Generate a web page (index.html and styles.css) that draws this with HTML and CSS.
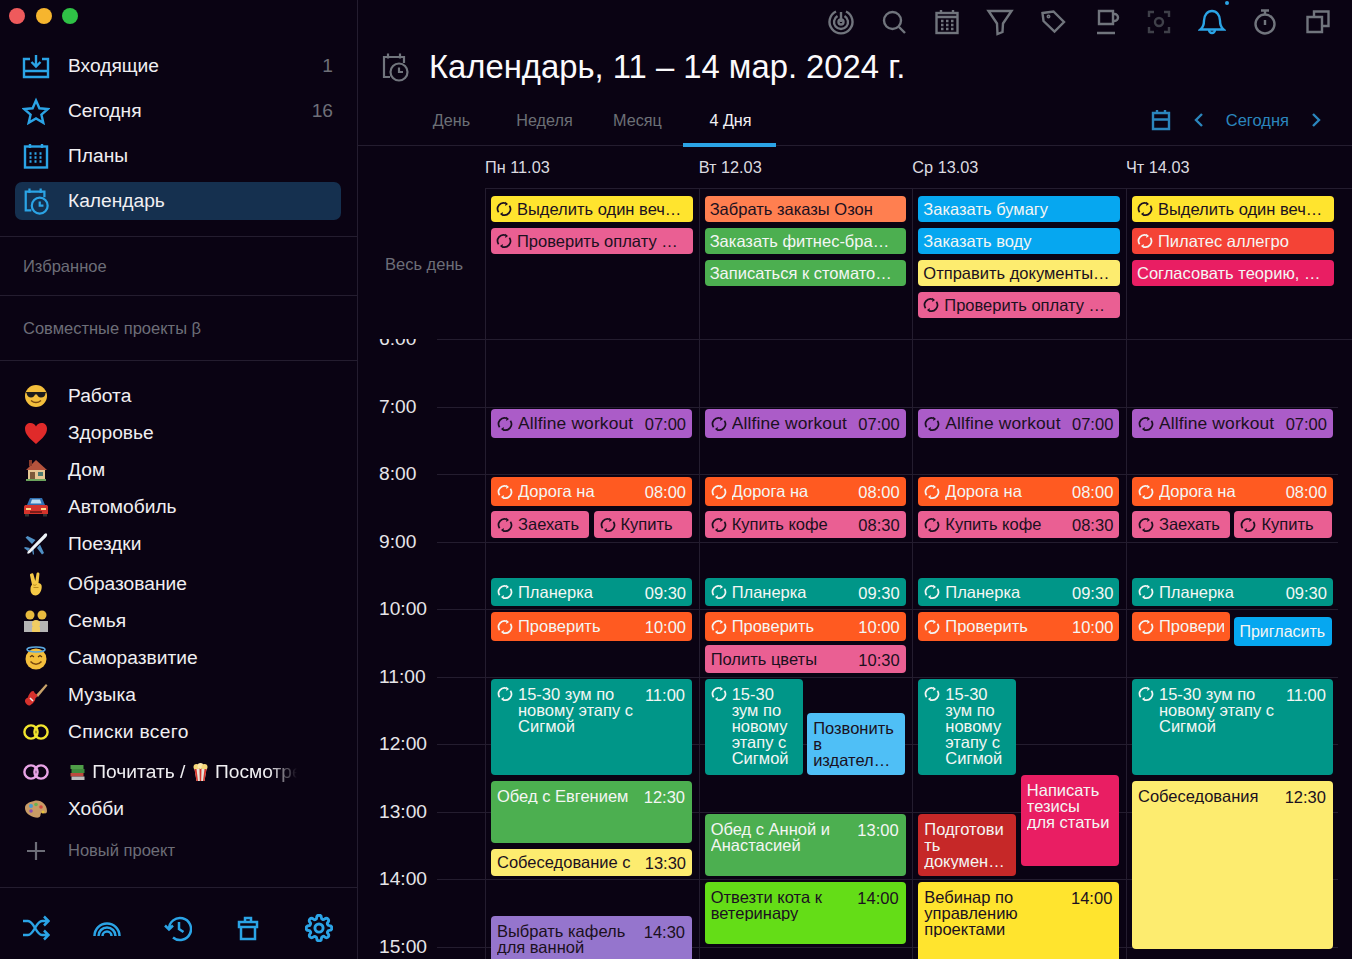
FILE: index.html
```html
<!DOCTYPE html>
<html lang="ru">
<head>
<meta charset="utf-8">
<title>Календарь</title>
<link rel="stylesheet" href="styles.css">
</head>
<body>
<svg class="defs" width="0" height="0" aria-hidden="true">
  <symbol id="sync" viewBox="0 0 16 16"><path d="M2.600 11.200A6 6 0 0 1 9.800 2.300M13.400 4.800A6 6 0 0 1 6.200 13.700" fill="none" stroke="currentColor" stroke-width="1.700"/><path d="M9.300 .8l2.700 2.200-2.700 1.900zM6.700 15.200L4 13l2.700-1.900z" fill="currentColor"/></symbol>
  <symbol id="rings" viewBox="0 0 28 16"><circle cx="9" cy="8" r="6.600" fill="none" stroke="currentColor" stroke-width="2.400"/><circle cx="19" cy="8" r="6.600" fill="none" stroke="currentColor" stroke-width="2.400"/></symbol>
</svg>
<div class="app">
  <aside class="sidebar">
    <div class="lights"><i class="light red"></i><i class="light amber"></i><i class="light green"></i></div>
    <nav class="nav">
      <a class="nav-item"><svg class="nav-ico" viewBox="0 0 28 24"><path d="M8 5H2v18h24V5h-6M2 17h24M14 1v11M9.500 8l4.500 4.500L18.500 8"/></svg><span class="nav-label">Входящие</span><span class="count">1</span></a>
      <a class="nav-item"><svg class="nav-ico" viewBox="0 0 28 26"><path d="M14 2.500l3.400 7.800 8.300.8-6.300 5.500 1.900 8.200-7.300-4.300-7.300 4.300 1.900-8.200-6.300-5.500 8.300-.8z"/></svg><span class="nav-label">Сегодня</span><span class="count">16</span></a>
      <a class="nav-item"><svg class="nav-ico" viewBox="0 0 28 26"><rect x="3" y="3.500" width="22" height="21"/><path d="M8 1v4M20 1v4"/><path class="dots" d="M7.500 10.500h2M12.500 10.500h2M17.500 10.500h2M7.500 14.500h2M12.500 14.500h2M17.500 14.500h2M7.500 18.500h2M12.500 18.500h2M17.500 18.500h2"/></svg><span class="nav-label">Планы</span></a>
      <a class="nav-item active"><svg class="nav-ico" viewBox="0 0 28 30"><path d="M9 25H3V5h20v6M7 1.500v5M19 1.500v5"/><circle cx="18" cy="20" r="8.500"/><path d="M18 15.500V20h4"/></svg><span class="nav-label">Календарь</span></a>
    </nav>
    <div class="section fav">Избранное</div>
    <div class="section shared">Совместные проекты β</div>
    <div class="projects">
      <div class="row"><svg class="emo" viewBox="0 0 24 24"><circle cx="12" cy="12" r="11" fill="#f4bf3c"/><path d="M1.500 8h21l-1 1c0 3-2 4.500-4.500 4.500-2.500 0-3.500-1.500-4-3h-2c-.5 1.500-1.500 3-4 3C5 13.500 3 12 2.500 9z" fill="#1c1c1c"/><path d="M7 16.500c3 2.500 7 2.500 10 0" fill="none" stroke="#7a4a10" stroke-width="1.500"/></svg><span>Работа</span></div>
      <div class="row"><svg class="emo" viewBox="0 0 24 24"><path d="M12 23C5 17 1 13 1 7.500 1 4 3.500 2 6.500 2 9 2 11 3.500 12 5.500 13 3.500 15 2 17.500 2 20.500 2 23 4 23 7.500 23 13 19 17 12 23z" fill="#e02a2a"/></svg><span>Здоровье</span></div>
      <div class="row"><svg class="emo" viewBox="0 0 24 24"><rect x="4" y="11" width="17" height="11" fill="#e6c794"/><path d="M12 2L2 12h21z" fill="#b5533c"/><rect x="5" y="2" width="3" height="6" fill="#8c3b2a"/><rect x="6" y="14" width="5" height="8" fill="#7c5a3a"/><rect x="14" y="14" width="5" height="4" fill="#4c7a70"/><rect x="2" y="21" width="20" height="2" fill="#6ba35c"/></svg><span>Дом</span></div>
      <div class="row"><svg class="emo" viewBox="0 0 24 24"><path d="M6 3h12l3 7H3z" fill="#2f6fb0"/><path d="M8 4.500h8l1.500 4h-11z" fill="#bcdcf0"/><path d="M0 12c0-1.500 1-2 2-2h20c1 0 2 .5 2 2v7H0z" fill="#d5342c"/><rect x="2" y="13" width="5" height="2" fill="#ffd98a"/><rect x="17" y="13" width="5" height="2" fill="#ffd98a"/><rect x="6" y="16" width="12" height="2" fill="#7c1c18"/><rect x="1" y="19" width="4" height="2.500" fill="#333"/><rect x="19" y="19" width="4" height="2.500" fill="#333"/></svg><span>Автомобиль</span></div>
      <div class="row"><svg class="emo" viewBox="0 0 24 24"><path d="M11.500 8L3.500 4 1.500 5.500 8 12zM16 12.500l4 8.500-2 1.500-5-6.500z" fill="#4f8fc4"/><path d="M6 16l-5-1-1 1 4 3zM8 18l1 5 1-1-.5-5z" fill="#4f8fc4"/><path d="M22.500 1.500c1.200 1 .6 2.500-.5 3.700L6.500 20.500c-1 1-2.500 1.500-3 1s0-2 1-3L19.500 3c1-1 2-2 3-1.500z" fill="#eef3f7"/></svg><span>Поездки</span></div>
      <div class="row gap"><svg class="emo" viewBox="0 0 24 24"><path d="M7.500 1.500c1-.5 1.800 0 2 1l1.800 6.500L12.500 1.800c.2-1 1-1.500 1.900-1.200.8.200 1.200 1 1 2L14.500 11c2.500.3 3.500 2 3.200 4.500-.3 4-2.700 8-6.200 8-3.500 0-5.200-3-5-6.500 0-2 .6-3.300 1.500-4.200L6 3.200c-.2-.8.500-1.500 1.500-1.700z" fill="#f5c946"/><path d="M9 12.500c1 1 2.500 1 3.500 0M9.500 15.500h5" fill="none" stroke="#b98a1d" stroke-width="1"/></svg><span>Образование</span></div>
      <div class="row"><svg class="emo" viewBox="0 0 24 24"><rect x="0" y="12" width="24" height="11" fill="#b5b5b5"/><circle cx="6" cy="6" r="4.500" fill="#e8bb3e"/><circle cx="18" cy="6" r="4.500" fill="#e8bb3e"/><circle cx="12" cy="15" r="4" fill="#f1cd62"/><rect x="8" y="18" width="8" height="5" fill="#f1cd62"/></svg><span>Семья</span></div>
      <div class="row"><svg class="emo" viewBox="0 0 24 24"><circle cx="12" cy="13" r="10.500" fill="#f4bf3c"/><ellipse cx="12" cy="3.500" rx="9" ry="2.500" fill="none" stroke="#5ba8e0" stroke-width="1.600"/><path d="M6 11l2-1.500 2 1.500M14 11l2-1.500 2 1.500" fill="none" stroke="#5c3510" stroke-width="1.200"/><path d="M6.500 15.500c3 3.500 8 3.500 11 0" fill="none" stroke="#7a4a10" stroke-width="1.500"/></svg><span>Саморазвитие</span></div>
      <div class="row"><svg class="emo" viewBox="0 0 24 24"><path d="M12 12L22 1l1.500 1.500L14 14z" fill="#c9a36a"/><path d="M9 8c1.500 0 1 2.500 4 3.500 1 2-.5 3-1.500 3.500 0 3-3 6-5.500 7.500-2 .5-4.500-2-5-4-.5-2 1.500-3.500 3-4 .5-3 3-6.500 5-6.500z" fill="#d6312c"/><path d="M6 15l3 3" stroke="#eee" stroke-width="1.600"/></svg><span>Музыка</span></div>
      <div class="row ring-y"><svg class="ring" viewBox="0 0 28 16"><use href="#rings"/></svg><span class="spaced">Списки всего</span></div>
      <div class="row gap ring-p"><svg class="ring" viewBox="0 0 28 16"><use href="#rings"/></svg><span class="fade"><svg class="mini" viewBox="0 0 18 18"><rect x="2" y="2" width="13" height="4" fill="#4f9e48"/><rect x="3" y="6" width="13" height="4" fill="#3f8a3c"/><rect x="2" y="10" width="13" height="3.500" fill="#bd4a3d"/><rect x="3" y="13.500" width="13" height="3.500" fill="#bdbdbd"/></svg> Почитать / <svg class="mini" viewBox="0 0 18 18"><circle cx="5" cy="4" r="3" fill="#f6d77a"/><circle cx="9" cy="3" r="3" fill="#fbe7a8"/><circle cx="13" cy="4" r="3" fill="#f6d77a"/><path d="M3 6h12l-2 12H5z" fill="#e8e3d8"/><path d="M5 6l1.500 12H5L3 6zM8 6h2l-.3 12H8.300zM13 6h2l-2 12h-1.500z" fill="#d8352c"/></svg> Посмотреть</span></div>
      <div class="row"><svg class="emo" viewBox="0 0 24 24"><path d="M10 4c6-2 13 3 13 10 0 2.500-2 3-3.500 2-1.500-1-3 0-3 2s-2 3-5 2.500C6 19.500 1 16 1 11c0-4 4-6 9-7z" fill="#c99c66"/><circle cx="7" cy="9" r="2" fill="#4a9bd1"/><circle cx="12" cy="7.500" r="1.800" fill="#6cb24f"/><circle cx="17" cy="10" r="1.800" fill="#d2483e"/><circle cx="7" cy="14" r="1.800" fill="#8d4fb0"/><circle cx="19" cy="15" r="1.500" fill="#e7c23a"/></svg><span>Хобби</span></div>
      <div class="row new"><svg class="plus" viewBox="0 0 20 20"><path d="M10 1v18M1 10h18"/></svg><span>Новый проект</span></div>
    </div>
    <footer class="foot">
      <svg class="foot-ico" viewBox="0 0 28 26"><path d="M1 6h5c6 0 8 14 14 14h6M1 20h5c6 0 8-14 14-14h6M22 1.500L26.500 6 22 10.500M22 15.500l4.500 4.500-4.500 4.500"/></svg>
      <svg class="foot-ico" viewBox="0 0 28 26"><path d="M1.500 21a12.500 12.500 0 0 1 25 0M5.500 21a8.500 8.500 0 0 1 17 0M9.500 21a4.500 4.500 0 0 1 9 0"/></svg>
      <svg class="foot-ico" viewBox="0 0 28 26"><path d="M5 14A11 11 0 1 1 9 22.500M1 10.500l4 4 4-4M15 7v7l4.500 3"/></svg>
      <svg class="foot-ico" viewBox="0 0 28 26"><path d="M5 7h18v5H5zM7 12v12h14V12M11 7V3h6v4"/></svg>
      <svg class="foot-ico" viewBox="0 0 24 24"><circle cx="12" cy="12" r="3.500"/><path d="M19.400 15a1.650 1.650 0 0 0 .33 1.820l.06.06a2 2 0 0 1 0 2.830 2 2 0 0 1-2.830 0l-.06-.06a1.650 1.650 0 0 0-1.820-.33 1.650 1.650 0 0 0-1 1.510V21a2 2 0 0 1-2 2 2 2 0 0 1-2-2v-.09A1.650 1.650 0 0 0 9 19.400a1.650 1.650 0 0 0-1.820.33l-.06.06a2 2 0 0 1-2.830 0 2 2 0 0 1 0-2.830l.06-.06a1.650 1.650 0 0 0 .33-1.820 1.650 1.650 0 0 0-1.510-1H3a2 2 0 0 1-2-2 2 2 0 0 1 2-2h.09A1.650 1.650 0 0 0 4.600 9a1.650 1.650 0 0 0-.33-1.820l-.06-.06a2 2 0 0 1 0-2.830 2 2 0 0 1 2.830 0l.06.06a1.650 1.650 0 0 0 1.820.33H9a1.650 1.650 0 0 0 1-1.510V3a2 2 0 0 1 2-2 2 2 0 0 1 2 2v.09a1.650 1.650 0 0 0 1 1.510 1.650 1.650 0 0 0 1.820-.33l.06-.06a2 2 0 0 1 2.830 0 2 2 0 0 1 0 2.830l-.06.06a1.650 1.650 0 0 0-.33 1.820V9a1.650 1.650 0 0 0 1.510 1H21a2 2 0 0 1 2 2 2 2 0 0 1-2 2h-.09a1.650 1.650 0 0 0-1.510 1z"/></svg>
    </footer>
  </aside>

  <main class="main">
    <div class="toolbar">
      <svg class="tb" viewBox="0 0 28 28"><path d="M9 3.500a11.500 11.500 0 1 0 10 0M10.500 8a7 7 0 1 0 7 0"/><circle cx="14" cy="14" r="2.500"/><path d="M14 4v10"/></svg>
      <svg class="tb" viewBox="0 0 28 28"><circle cx="12.500" cy="12.500" r="8.500"/><path d="M19 19l6 6"/></svg>
      <svg class="tb" viewBox="0 0 28 28"><rect x="3.500" y="5" width="21" height="20"/><path d="M8 2v4M20 2v4M3.500 9h21"/><path class="tb-dots" d="M8 13h2.500M13 13h2.500M18 13h2.500M8 17h2.500M13 17h2.500M18 17h2.500M8 21h2.500M13 21h2.500M18 21h2.500"/></svg>
      <svg class="tb" viewBox="0 0 28 28"><path d="M2.500 3h23L17 15.500 16.500 24l-5 2-.5-10.500z"/></svg>
      <svg class="tb" viewBox="0 0 28 28"><path d="M3.500 5l11-1.500L25 14l-9.500 9.500L4.500 13z"/><circle cx="9.500" cy="8.500" r=".8"/></svg>
      <svg class="tb" viewBox="0 0 28 28"><path d="M7 3h14v13H7zM21 6h1.500a2.500 2.500 0 0 1 0 7H21M5 25h18"/></svg>
      <svg class="tb dim" viewBox="0 0 28 28"><path d="M4 9V4h5M19 4h5v5M24 19v5h-5M9 24H4v-5"/><circle cx="14" cy="14" r="4"/></svg>
      <div class="bell"><svg class="tb tb-blue" viewBox="0 0 28 28"><path d="M2.500 21.500c3-2.500 3.500-5 3.500-9C6 7 9.500 3 14 3s8 4 8 9.500c0 4 .5 6.500 3.500 9zM11 22a3 3 0 0 0 6 0"/></svg><i class="bell-dot"></i></div>
      <svg class="tb" viewBox="0 0 28 28"><circle cx="14" cy="16" r="9.500"/><path d="M10 2.500h8M14 2.500v4M14 12v5"/></svg>
      <svg class="tb" viewBox="0 0 28 28"><path d="M10 9V3.500h14.500V18H18M3.500 9H18v15H3.500z"/></svg>
    </div>
    <div class="title-row">
      <svg class="title-ico" viewBox="0 0 28 30"><path d="M9 25H3V5h20v6M7 1.500v5M19 1.500v5"/><circle cx="18" cy="20" r="8.500"/><path d="M18 15.500V20h4"/></svg>
      <h1 class="title">Календарь, 11 – 14 мар. 2024 г.</h1>
    </div>
    <div class="tabs">
      <a class="tab">День</a><a class="tab">Неделя</a><a class="tab">Месяц</a><a class="tab on">4 Дня</a>
      <div class="date-nav">
        <svg class="dn-cal" viewBox="0 0 20 22"><path d="M2 4h16v16H2zM2 10.500h16M6 1v3M14 1v3"/></svg>
        <svg class="dn-chev" viewBox="0 0 10 16"><path d="M8 2L2 8l6 6"/></svg>
        <span class="today">Сегодня</span>
        <svg class="dn-chev" viewBox="0 0 10 16"><path d="M2 2l6 6-6 6"/></svg>
      </div>
    </div>
    <div class="day-head">
      <span>Пн 11.03</span><span>Вт 12.03</span><span>Ср 13.03</span><span>Чт 14.03</span>
    </div>
    <div class="allday">
      <div class="allday-label">Весь день</div>
      <div class="ad-col">
        <div class="ad yellow"><svg class="s"><use href="#sync"/></svg>Выделить один веч…</div>
        <div class="ad pink"><svg class="s"><use href="#sync"/></svg>Проверить оплату …</div>
      </div>
      <div class="ad-col">
        <div class="ad coral">Забрать заказы Озон</div>
        <div class="ad green lt">Заказать фитнес-бра…</div>
        <div class="ad green lt">Записаться к стомато…</div>
      </div>
      <div class="ad-col">
        <div class="ad blue lt">Заказать бумагу</div>
        <div class="ad blue lt">Заказать воду</div>
        <div class="ad pale">Отправить документы…</div>
        <div class="ad pink"><svg class="s"><use href="#sync"/></svg>Проверить оплату …</div>
      </div>
      <div class="ad-col">
        <div class="ad yellow"><svg class="s"><use href="#sync"/></svg>Выделить один веч…</div>
        <div class="ad red lt"><svg class="s"><use href="#sync"/></svg>Пилатес аллегро</div>
        <div class="ad crimson lt">Согласовать теорию, …</div>
      </div>
    </div>
    <div class="grid">
      <div class="hr"><span class="hr-l">6:00</span><i></i></div>
      <div class="hr"><span class="hr-l">7:00</span><i></i></div>
      <div class="hr"><span class="hr-l">8:00</span><i></i></div>
      <div class="hr"><span class="hr-l">9:00</span><i></i></div>
      <div class="hr"><span class="hr-l">10:00</span><i></i></div>
      <div class="hr"><span class="hr-l">11:00</span><i></i></div>
      <div class="hr"><span class="hr-l">12:00</span><i></i></div>
      <div class="hr"><span class="hr-l">13:00</span><i></i></div>
      <div class="hr"><span class="hr-l">14:00</span><i></i></div>
      <div class="hr"><span class="hr-l">15:00</span><i></i></div>
      <div class="days">
        <div class="day">
          <div class="ev purple" style="top:70px;height:29px"><svg class="s"><use href="#sync"/></svg><b class="wide">Allfine workout</b><time>07:00</time></div>
          <div class="ev orange lt" style="top:138px;height:29px"><svg class="s"><use href="#sync"/></svg><b>Дорога на</b><time>08:00</time></div>
          <div class="ev pink half" style="top:172px;height:27px"><svg class="s"><use href="#sync"/></svg><b>Заехать</b></div>
          <div class="ev pink half r" style="top:172px;height:27px"><svg class="s"><use href="#sync"/></svg><b>Купить</b></div>
          <div class="ev teal lt" style="top:239px;height:28px"><svg class="s"><use href="#sync"/></svg><b>Планерка</b><time>09:30</time></div>
          <div class="ev orange lt" style="top:273px;height:29px"><svg class="s"><use href="#sync"/></svg><b>Проверить</b><time>10:00</time></div>
          <div class="ev teal lt multi sy" style="top:340px;height:96px"><svg class="s"><use href="#sync"/></svg><b>15-30 зум по новому этапу с Сигмой</b><time>11:00</time></div>
          <div class="ev green lt multi" style="top:442px;height:62px"><b>Обед с Евгением</b><time>12:30</time></div>
          <div class="ev pale" style="top:510px;height:27px"><b>Собеседование с</b><time>13:30</time></div>
          <div class="ev violet multi" style="top:577px;height:60px"><b>Выбрать кафель для ванной</b><time>14:30</time></div>
        </div>
        <div class="day">
          <div class="ev purple" style="top:70px;height:29px"><svg class="s"><use href="#sync"/></svg><b class="wide">Allfine workout</b><time>07:00</time></div>
          <div class="ev orange lt" style="top:138px;height:29px"><svg class="s"><use href="#sync"/></svg><b>Дорога на</b><time>08:00</time></div>
          <div class="ev pink" style="top:172px;height:27px"><svg class="s"><use href="#sync"/></svg><b>Купить кофе</b><time>08:30</time></div>
          <div class="ev teal lt" style="top:239px;height:28px"><svg class="s"><use href="#sync"/></svg><b>Планерка</b><time>09:30</time></div>
          <div class="ev orange lt" style="top:273px;height:29px"><svg class="s"><use href="#sync"/></svg><b>Проверить</b><time>10:00</time></div>
          <div class="ev pink" style="top:306px;height:28px"><b>Полить цветы</b><time>10:30</time></div>
          <div class="ev teal lt multi sy half" style="top:340px;height:96px"><svg class="s"><use href="#sync"/></svg><b>15-30 зум по новому этапу с Сигмой</b></div>
          <div class="ev sky multi half r" style="top:374px;height:62px"><b>Позвонить в издател…</b></div>
          <div class="ev green lt multi" style="top:475px;height:62px"><b>Обед с Анной и Анастасией</b><time>13:00</time></div>
          <div class="ev lime multi" style="top:543px;height:62px"><b>Отвезти кота к ветеринару</b><time>14:00</time></div>
        </div>
        <div class="day">
          <div class="ev purple" style="top:70px;height:29px"><svg class="s"><use href="#sync"/></svg><b class="wide">Allfine workout</b><time>07:00</time></div>
          <div class="ev orange lt" style="top:138px;height:29px"><svg class="s"><use href="#sync"/></svg><b>Дорога на</b><time>08:00</time></div>
          <div class="ev pink" style="top:172px;height:27px"><svg class="s"><use href="#sync"/></svg><b>Купить кофе</b><time>08:30</time></div>
          <div class="ev teal lt" style="top:239px;height:28px"><svg class="s"><use href="#sync"/></svg><b>Планерка</b><time>09:30</time></div>
          <div class="ev orange lt" style="top:273px;height:29px"><svg class="s"><use href="#sync"/></svg><b>Проверить</b><time>10:00</time></div>
          <div class="ev teal lt multi sy half" style="top:340px;height:96px"><svg class="s"><use href="#sync"/></svg><b>15-30 зум по новому этапу с Сигмой</b></div>
          <div class="ev crimson lt multi half r" style="top:436px;height:91px"><b>Написать тезисы для статьи</b></div>
          <div class="ev dred lt multi half" style="top:475px;height:62px"><b>Подготови ть докумен…</b></div>
          <div class="ev yellow multi" style="top:543px;height:90px"><b>Вебинар по управлению проектами</b><time>14:00</time></div>
        </div>
        <div class="day">
          <div class="ev purple" style="top:70px;height:29px"><svg class="s"><use href="#sync"/></svg><b class="wide">Allfine workout</b><time>07:00</time></div>
          <div class="ev orange lt" style="top:138px;height:29px"><svg class="s"><use href="#sync"/></svg><b>Дорога на</b><time>08:00</time></div>
          <div class="ev pink half" style="top:172px;height:27px"><svg class="s"><use href="#sync"/></svg><b>Заехать</b></div>
          <div class="ev pink half r" style="top:172px;height:27px"><svg class="s"><use href="#sync"/></svg><b>Купить</b></div>
          <div class="ev teal lt" style="top:239px;height:28px"><svg class="s"><use href="#sync"/></svg><b>Планерка</b><time>09:30</time></div>
          <div class="ev orange lt half" style="top:273px;height:29px"><svg class="s"><use href="#sync"/></svg><b>Провери</b></div>
          <div class="ev blue lt half r tight" style="top:278px;height:29px"><b>Пригласить</b></div>
          <div class="ev teal lt multi sy" style="top:340px;height:96px"><svg class="s"><use href="#sync"/></svg><b>15-30 зум по новому этапу с Сигмой</b><time>11:00</time></div>
          <div class="ev pale multi" style="top:442px;height:168px"><b>Собеседования</b><time>12:30</time></div>
        </div>
      </div>
    </div>
  </main>
</div>
</body>
</html>
```
FILE: styles.css
```css
* { box-sizing: border-box; }
html, body { margin: 0; height: 100%; }
body {
  background: #0a0313;
  color: #f2f1f4;
  font-family: "Liberation Sans", Arial, sans-serif;
  overflow: hidden;
}
.defs { position: absolute; }
.app { display: flex; height: 959px; }

/* Sidebar */
.sidebar {
  width: 358px;
  flex: none;
  display: flex;
  flex-direction: column;
  border-right: 1px solid #241d2f;
}
.lights { display: flex; gap: 10.500px; padding: 8px 0 0 9px; height: 47px; }
.light { width: 16px; height: 16px; border-radius: 50%; }
.light.red { background: #ef5a5c; }
.light.amber { background: #f6b52e; }
.light.green { background: #2fc246; }

.nav { display: flex; flex-direction: column; gap: 7px; padding: 0 16px 16px 15px; border-bottom: 1px solid #241d2f; height: 190px; }
.nav-item { display: flex; align-items: center; height: 38px; padding: 0 8px 0 7px; border-radius: 7px; font-size: 19.200px; color: #f0eff2; }
.nav-item.active { background: #15304f; }
.nav-ico { width: 28px; height: 28px; margin-right: 18px; fill: none; stroke: #2ba4e6; stroke-width: 2.400; flex: none; }
.dots { stroke-width: 2.400; }
.nav-label { flex: 1; }
.count { color: #6e6f78; font-size: 19.200px; }

.section { display: flex; align-items: center; padding-left: 23px; font-size: 16.500px; color: #6d6e78; border-bottom: 1px solid #241d2f; }
.fav { height: 59px; }
.shared { height: 65px; }

.projects { flex: 1; padding-top: 16px; }
.row { display: flex; align-items: center; height: 37px; padding-left: 23px; font-size: 19.200px; color: #f0eff2; }
.row.gap { margin-top: 3px; }
.emo { width: 26px; height: 24px; margin-right: 19px; flex: none; }
.ring { width: 28px; height: 16px; margin: 0 18px 0 -1px; flex: none; }
.ring-y .ring { color: #f2e52e; }
.ring-p .ring { color: #e8a4e6; }
.spaced { letter-spacing: .35px; }
.row .fade { white-space: nowrap; overflow: hidden; width: 229px; -webkit-mask-image: linear-gradient(90deg, #000 88%, transparent 100%); mask-image: linear-gradient(90deg, #000 88%, transparent 100%); }
.mini { width: 19px; height: 18px; vertical-align: -3px; }
.row.new { margin-top: 5px; color: #6d6e78; font-size: 16.500px; }
.plus { width: 20px; height: 20px; margin: 0 22px 0 3px; fill: none; stroke: #6d6e78; stroke-width: 2.200; flex: none; }

.foot { height: 72px; border-top: 1px solid #241d2f; display: flex; align-items: center; justify-content: space-between; padding: 8px 24px 0 22px; }
.foot-ico { width: 28px; height: 28px; fill: none; stroke: #2ba4e6; stroke-width: 2.500; }

/* Main */
.main { flex: 1; min-width: 0; display: flex; flex-direction: column; }
.toolbar { display: flex; align-items: center; justify-content: flex-end; gap: 25px; height: 44px; padding-right: 20px; }
.tb { width: 28px; height: 28px; fill: none; stroke: #71757d; stroke-width: 2.400; flex: none; display: block; }
.tb-dots { stroke-width: 2.400; }
.tb.dim { stroke: #3f4049; }
.tb.tb-blue { stroke: #2ba4e6; }
.bell { position: relative; }
.bell-dot { position: absolute; top: -7px; right: -3px; width: 4px; height: 4px; background: #2ba4e6; border-radius: 50%; }

.title-row { display: flex; align-items: center; height: 46px; padding-left: 23px; }
.title-ico { width: 28px; height: 30px; margin-right: 20px; fill: none; stroke: #71757d; stroke-width: 2.200; flex: none; }
.title { margin: 0; font-size: 32.800px; font-weight: 400; color: #fbfafc; }

.tabs { display: flex; align-items: flex-start; height: 56px; padding: 0 31px 0 46px; border-bottom: 1px solid #241d2f; }
.tab { width: 93px; height: 56px; text-align: center; padding: 21px 0 0 2px; font-size: 16.200px; color: #6c7076; }
.tab.on { color: #f2f1f4; border-bottom: 4px solid #2ba4e6; height: 57px; }
.date-nav { margin-left: auto; display: flex; align-items: center; height: 40px; margin-top: 10px; color: #2b86bd; }
.dn-cal { width: 20px; height: 22px; fill: none; stroke: #2b86bd; stroke-width: 2.400; margin-right: 23px; }
.dn-chev { width: 10px; height: 16px; fill: none; stroke: #2b86bd; stroke-width: 2.400; }
.today { font-size: 16.500px; margin: 0 22px; }

.day-head { display: grid; grid-template-columns: repeat(4, 213.670px); padding-left: 127px; height: 42px; align-items: center; font-size: 16.300px; color: #dcdbe0; }

.allday { display: grid; grid-template-columns: 127px repeat(4, 213.670px) 1fr; height: 151px; }
.allday::after { content: ""; border-top: 1px solid #241d2f; }
.allday-label { padding: 67px 0 0 27px; font-size: 16.500px; color: #6d6e78; }
.ad-col { display: flex; flex-direction: column; gap: 6px; padding: 7px 6px 0 5px; border-left: 1px solid #241d2f; border-top: 1px solid #241d2f; }
.ad { display: flex; align-items: center; height: 26px; border-radius: 4px; padding-left: 5px; font-size: 16.500px; white-space: nowrap; overflow: hidden; color: #1b1020; }

.grid { position: relative; flex: 1; overflow: hidden; }
.hr { display: flex; height: 67.500px; padding-right: 14px; }
.hr-l { width: 79px; padding-left: 21px; line-height: 0; font-size: 19.200px; color: #e6e5e9; }
.hr i { flex: 1; border-top: 1px solid #241d2f; }
.hr:first-child i { margin-right: -14px; }
.days { position: absolute; left: 127px; top: 0; bottom: 0; display: grid; grid-template-columns: repeat(4, 213.670px); }
.day { position: relative; border-left: 1px solid #241d2f; }

.ev { position: absolute; left: 5px; width: 201px; display: flex; align-items: center; padding: 0 6px; border-radius: 4px; font-size: 16.500px; color: #1b1020; overflow: hidden; }
.ev b { font-weight: 400; white-space: nowrap; flex: 1; overflow: hidden; }
.ev b.wide { font-size: 17.400px; letter-spacing: .15px; }
.ev time { font-size: 16.500px; margin: 2px 0 0 6px; flex: none; }
.ev.half { width: 98px; }
.ev.half.r { left: 107.500px; }
.ev.tight { padding: 0 4px 0 5px; font-size: 16px; }
.ev.multi { align-items: flex-start; padding: 7px 7px 0 6px; line-height: 16px; }
.ev.multi time { margin-top: 1px; }
.ev.multi b { white-space: normal; overflow-wrap: anywhere; }
.s { width: 16px; height: 16px; margin: 0 5px 0 0; flex: none; }

.yellow { background: #ffe42e; }
.pink { background: #ea5f93; }
.coral { background: #ff7f50; }
.green { background: #4caf50; }
.blue { background: #06a7f0; }
.pale { background: #fdec6f; }
.red { background: #f44336; }
.crimson { background: #e91e63; }
.purple { background: #ab5cc8; }
.orange { background: #ff5a21; }
.teal { background: #009688; }
.sky { background: #4fbff6; }
.lime { background: #64dd17; }
.violet { background: #9575cd; }
.dred { background: #c62828; }
.ad.lt, .ev.lt { color: #f4f6f4; }
```
